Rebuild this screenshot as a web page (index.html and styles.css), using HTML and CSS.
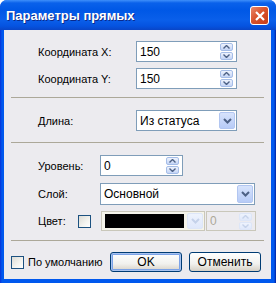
FILE: index.html
```html
<!DOCTYPE html>
<html lang="ru">
<head>
    <meta charset="UTF-8">
    <title>Параметры прямых</title>
    <link rel="stylesheet" href="styles.css">
</head>
<body>
    <div class="window">
        <div class="titlebar">
            <span class="title">Параметры прямых</span>
            <span class="close">
                <svg width="10" height="10" viewBox="0 0 10 10"><path d="M1 1 L9 9 M9 1 L1 9" stroke="#fff" stroke-width="2.2"/></svg>
            </span>
        </div>
        <div class="client">
            <div class="row first">
                <span class="label">Координата X:</span>
                <div class="field spin wide"><span class="value">150</span>
                    <span class="spinbtn">
                        <span><svg width="7" height="4" viewBox="0 0 7 4"><path d="M0.5 3.5 L3.5 0.5 L6.5 3.5" fill="none" stroke="#4d6185" stroke-width="1.4"/></svg></span>
                        <span><svg width="7" height="4" viewBox="0 0 7 4"><path d="M0.5 0.5 L3.5 3.5 L6.5 0.5" fill="none" stroke="#4d6185" stroke-width="1.4"/></svg></span>
                    </span>
                </div>
            </div>
            <div class="row second">
                <span class="label">Координата Y:</span>
                <div class="field spin wide"><span class="value">150</span>
                    <span class="spinbtn">
                        <span><svg width="7" height="4" viewBox="0 0 7 4"><path d="M0.5 3.5 L3.5 0.5 L6.5 3.5" fill="none" stroke="#4d6185" stroke-width="1.4"/></svg></span>
                        <span><svg width="7" height="4" viewBox="0 0 7 4"><path d="M0.5 0.5 L3.5 3.5 L6.5 0.5" fill="none" stroke="#4d6185" stroke-width="1.4"/></svg></span>
                    </span>
                </div>
            </div>
            <div class="sep sep1"></div>
            <div class="row third">
                <span class="label">Длина:</span>
                <div class="field combo wide"><span class="value">Из статуса</span>
                    <span class="dropbtn"><svg width="9" height="6" viewBox="0 0 9 6"><path d="M1 1 L4.5 4.5 L8 1" fill="none" stroke="#4d6185" stroke-width="2"/></svg></span>
                </div>
            </div>
            <div class="sep sep2"></div>
            <div class="row fourth">
                <span class="label short">Уровень:</span>
                <div class="field spin level"><span class="value">0</span>
                    <span class="spinbtn">
                        <span><svg width="7" height="4" viewBox="0 0 7 4"><path d="M0.5 3.5 L3.5 0.5 L6.5 3.5" fill="none" stroke="#4d6185" stroke-width="1.4"/></svg></span>
                        <span><svg width="7" height="4" viewBox="0 0 7 4"><path d="M0.5 0.5 L3.5 3.5 L6.5 0.5" fill="none" stroke="#4d6185" stroke-width="1.4"/></svg></span>
                    </span>
                </div>
            </div>
            <div class="row fifth">
                <span class="label short">Слой:</span>
                <div class="field combo layer"><span class="value">Основной</span>
                    <span class="dropbtn"><svg width="9" height="6" viewBox="0 0 9 6"><path d="M1 1 L4.5 4.5 L8 1" fill="none" stroke="#4d6185" stroke-width="2"/></svg></span>
                </div>
            </div>
            <div class="row sixth">
                <span class="label color-label">Цвет:</span>
                <span class="check"></span>
                <div class="field colorbox">
                    <span class="swatch"></span>
                    <span class="dropbtn off"><svg width="9" height="6" viewBox="0 0 9 6"><path d="M1 1 L4.5 4.5 L8 1" fill="none" stroke="#c5d2ea" stroke-width="2"/></svg></span>
                </div>
                <div class="field spin off alpha"><span class="value">0</span>
                    <span class="spinbtn">
                        <span><svg width="7" height="4" viewBox="0 0 7 4"><path d="M0.5 3.5 L3.5 0.5 L6.5 3.5" fill="none" stroke="#c5d2ea" stroke-width="1.4"/></svg></span>
                        <span><svg width="7" height="4" viewBox="0 0 7 4"><path d="M0.5 0.5 L3.5 3.5 L6.5 0.5" fill="none" stroke="#c5d2ea" stroke-width="1.4"/></svg></span>
                    </span>
                </div>
            </div>
            <div class="sep sep3"></div>
            <div class="row bottom">
                <span class="check"></span>
                <span class="default-label">По умолчанию</span>
                <button class="btn ok">OK</button>
                <button class="btn">Отменить</button>
            </div>
        </div>
    </div>
</body>
</html>
```

FILE: styles.css
```css
body {
    margin: 0;
    background-color: #fff;
    font-family: "Liberation Sans", Arial, sans-serif;
    font-size: 11px;
    color: #000;
}
.window {
    width: 276px;
    height: 283px;
    display: flex;
    flex-direction: column;
    border-radius: 7px 7px 0 0;
    background: linear-gradient(to right, #0831d9 0, #0058ee 2px, #0058ee 274px, #001ea0 276px);
    overflow: hidden;
}
.titlebar {
    height: 30px;
    flex-shrink: 0;
    display: flex;
    align-items: center;
    justify-content: space-between;
    padding: 0 6px 0 6px;
    background: linear-gradient(to bottom, #3e8ffa 0, #0a61ea 3px, #0058e6 10px, #0a5fea 20px, #0553e0 26px, #0945c7 30px);
}
.title {
    color: #fff;
    font-weight: bold;
    font-size: 13px;
    text-shadow: 1px 1px 0 #0a2a8c;
    padding-top: 1px;
}
.close {
    width: 17px;
    height: 17px;
    border: 1px solid #fff;
    border-radius: 3px;
    background: linear-gradient(135deg, #e9876a 0, #d9532c 45%, #c63d18 100%);
    display: flex;
    align-items: center;
    justify-content: center;
    margin-top: 1px;
    margin-right: 1px;
}
.client {
    flex: 1;
    margin: 0 5px 4px 4px;
    background-color: #ecebef;
    padding: 0 7px;
}
.row {
    display: flex;
    align-items: center;
    height: 21px;
}
.row.first { margin-top: 11px; }
.row.second { margin-top: 6px; }
.row.third { margin-top: 12px; }
.row.fourth { margin-top: 12px; }
.row.fifth { margin-top: 7px; height: 22px; }
.row.sixth { margin-top: 6px; height: 20px; }
.row.bottom { margin-top: 11px; height: 20px; }
.label {
    width: 98px;
    padding-left: 27px;
    flex-shrink: 0;
}
.label.short {
    width: 62px;
}
.label.color-label {
    width: 40px;
}
.sep {
    height: 1px;
    background-color: #aca899;
    margin: 8px 0 0 0;
}
.sep.sep2 { margin-top: 11px; }
.sep.sep3 { margin-top: 9px; }
.field {
    box-sizing: border-box;
    height: 100%;
    border: 1px solid #7f9db9;
    background-color: #fff;
    display: flex;
    align-items: center;
    flex-shrink: 0;
}
.field .value {
    flex: 1;
    padding-left: 3px;
    font-size: 12px;
}
.field.wide { width: 101px; }
.field.level { width: 83px; }
.field.layer { width: 155px; }
.spinbtn {
    display: flex;
    flex-direction: column;
    gap: 1px;
    width: 13px;
    height: 17px;
    margin-right: 3px;
}
.spinbtn span {
    flex: 1;
    box-sizing: border-box;
    border: 1px solid #a5bde8;
    border-radius: 2px;
    background: linear-gradient(to bottom, #eef3fd, #c3d4f6);
    display: flex;
    align-items: center;
    justify-content: center;
}
.dropbtn {
    box-sizing: border-box;
    width: 16px;
    height: calc(100% - 2px);
    margin-right: 1px;
    border: 1px solid #b2c6f1;
    border-radius: 2px;
    background: linear-gradient(to bottom, #d7e3fc, #b7cbf7);
    display: flex;
    align-items: center;
    justify-content: center;
}
.check {
    box-sizing: border-box;
    width: 13px;
    height: 13px;
    border: 1px solid #1c5180;
    background: linear-gradient(135deg, #dcdbd5 0, #f4f4f0 60%, #fff 100%);
    flex-shrink: 0;
}
.row.sixth .check {
    margin-right: 10px;
}
.colorbox {
    width: 104px;
    border-color: #c9c7ba;
    background-color: #f5f4ea;
    padding-left: 3px;
}
.swatch {
    flex: 1;
    height: 14px;
    background-color: #000;
    margin-right: 3px;
}
.dropbtn.off {
    border-color: #dde6f8;
    background: linear-gradient(to bottom, #eef3fd, #dfe8fb);
}
.field.off {
    border-color: #c9c7ba;
    background-color: #ecebef;
    color: #aca899;
}
.field.alpha {
    width: 50px;
    margin-left: 1px;
}
.spin.off .spinbtn span {
    border-color: #dde6f8;
    background: linear-gradient(to bottom, #eef3fd, #dfe8fb);
}
.default-label {
    margin-left: 4px;
    width: 82px;
    flex-shrink: 0;
}
.btn {
    box-sizing: border-box;
    width: 72px;
    height: 20px;
    flex-shrink: 0;
    border: 1px solid #003c74;
    border-radius: 3px;
    background: linear-gradient(to bottom, #fff 0, #f1f1ee 60%, #d6d0c5 100%);
    font-family: "Liberation Sans", Arial, sans-serif;
    font-size: 12px;
    padding: 0;
    color: #000;
}
.btn.ok {
    margin-right: 7px;
    box-shadow: inset 0 0 0 1px #a9c3ef, inset 0 0 0 2px #7ba2e7;
}
```
